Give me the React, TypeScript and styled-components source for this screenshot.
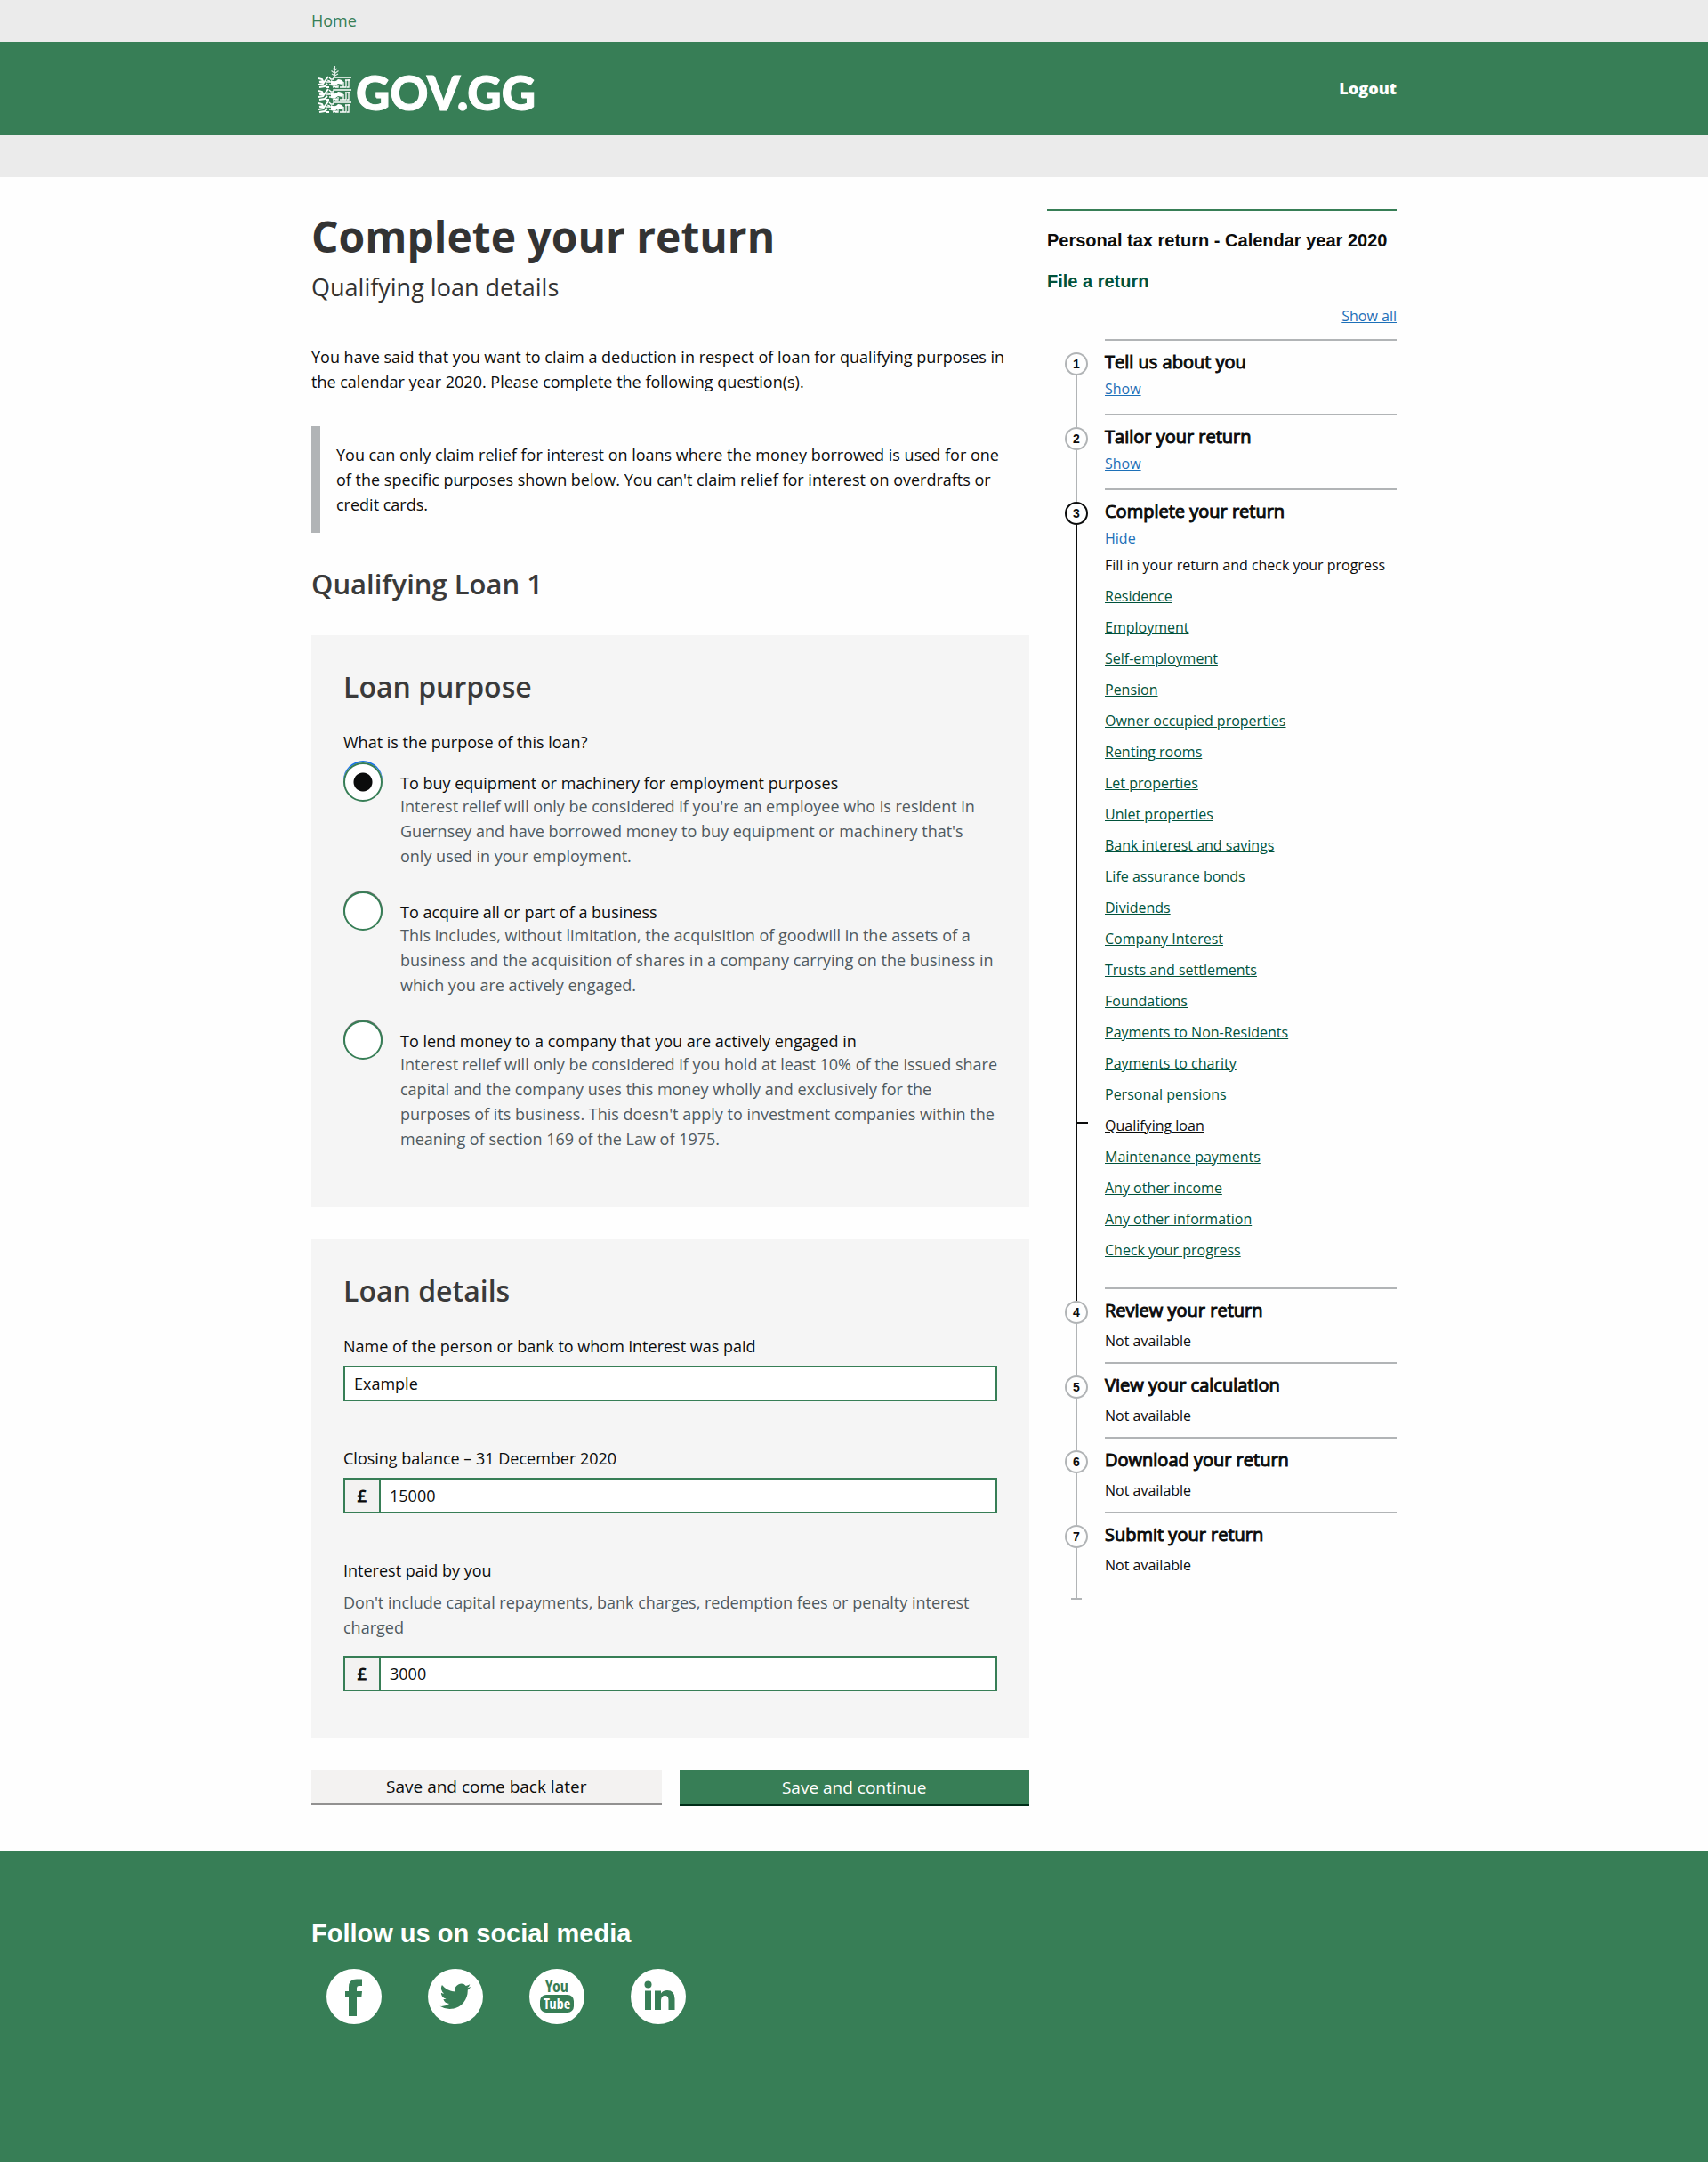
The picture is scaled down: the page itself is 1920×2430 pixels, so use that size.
import React, { useState } from "react";
import styled, { createGlobalStyle } from "styled-components";

const green = "#377e56";
const ink = "#0b0c0c";
const muted = "#505a5f";
const rule = "#b1b4b6";
const sans = '"Open Sans", "Noto Sans", sans-serif';
const arial = '"Liberation Sans", Arial, sans-serif';

const GlobalStyle = createGlobalStyle`
  *, *::before, *::after { box-sizing: border-box; }
  body {
    margin: 0;
    background: #fefefe;
    color: ${ink};
    font: 400 18px/28px ${sans};
  }
  h1, h2, h3, p, ol, ul, fieldset { margin: 0; padding: 0; border: 0; }
  ol, ul { list-style: none; }
  input, button { font: inherit; color: inherit; border-radius: 0; }
`;

const Page = styled.div`
  display: flex;
  flex-direction: column;
  min-height: 100vh;
`;

const Container = styled.div`
  width: 100%;
  max-width: 1260px;
  margin: 0 auto;
  padding: 0 20px;
`;

const GreyBar = styled.nav`
  min-height: 47px;
  padding: 9px 0 10px;
  background: #ebebeb;
`;

const HomeLink = styled.a`
  color: ${green};
  text-decoration: none;
`;

const Header = styled.header`
  background: ${green};
  color: #fff;
`;

const HeaderRow = styled(Container)`
  display: flex;
  align-items: center;
  justify-content: space-between;
  height: 105px;
`;

const LogoLink = styled.a`
  display: flex;
  align-items: center;
  gap: 4px;
  padding: 2px 0 0 8px;
  color: #fff;
  text-decoration: none;
`;

const LogoText = styled.span`
  padding-top: 6px;
  font: 900 53px/60px Lato, sans-serif;
  -webkit-text-stroke: 1px #fff;
`;

const LogoutLink = styled.a`
  padding-bottom: 2px;
  color: #fff;
  font-weight: 800;
  text-decoration: none;
`;

const Columns = styled(Container)`
  display: grid;
  grid-template-columns: minmax(0, 1fr) 393px;
  gap: 20px;
  align-items: start;
  padding-bottom: 51px;
`;

const Main = styled.main`
  padding-top: 36px;
`;

const Title = styled.h1`
  color: #333;
  font-size: 48px;
  line-height: 62px;
`;

const Subtitle = styled.p`
  margin-bottom: 38px;
  color: #333;
  font-size: 27px;
  line-height: 52px;
`;

const Inset = styled.div`
  margin: 36px 0;
  padding: 18px;
  border-left: 10px solid ${rule};
`;

const SectionTitle = styled.h2`
  margin-bottom: 36px;
  color: #3a3a3a;
  font-size: 31px;
  font-weight: 600;
  line-height: 43px;
`;

const Card = styled.section`
  margin-bottom: 36px;
  padding: 36px 36px 52px;
  background: #f5f5f5;
`;

const CardTitle = styled.h3`
  margin-bottom: 27px;
  color: #3a3a3a;
  font-size: 32px;
  font-weight: 600;
  line-height: 43px;
`;

const Legend = styled.legend`
  padding: 0;
`;

const Options = styled.div`
  display: grid;
  gap: 26px;
  padding: 9px 0 11px;
`;

const Option = styled.div`
  display: grid;
  grid-template-columns: 44px minmax(0, 1fr);
  column-gap: 20px;
  align-items: start;
`;

const Radio = styled.input`
  appearance: none;
  width: 44px;
  height: 44px;
  margin: 0;
  border: 2px solid ${green};
  border-radius: 50%;
  background: #fff;
  box-shadow: 0 -1px 0 #767676;

  &:checked {
    background: radial-gradient(circle, ${ink} 10px, #fff 11px);
    box-shadow: 0 -2px 0 #1a73e8;
  }
`;

const OptionLabel = styled.label`
  display: block;
  padding-top: 11px;
  line-height: 24px;
`;

const Hint = styled.p`
  margin-right: -2px;
  color: ${muted};
`;

const Fields = styled.div`
  display: grid;
  gap: 50px;
`;

const Field = styled.div`
  display: flex;
  flex-direction: column;
  gap: 8px;

  ${Hint} {
    margin-bottom: 10px;
  }
`;

const InputFrame = styled.div`
  display: flex;
  height: 40px;
  border: 2px solid ${green};
  background: #fff;
`;

const Prefix = styled.span`
  flex: none;
  width: 40px;
  border-right: 2px solid ${green};
  background: #f3f2f1;
  -webkit-text-stroke: 1px ${ink};
  line-height: 36px;
  text-align: center;
`;

const TextInput = styled.input`
  flex: 1;
  min-width: 0;
  padding: 0 10px;
  border: 0;
  background: transparent;
`;

const Actions = styled.div`
  display: grid;
  grid-template-columns: 1fr 1fr;
  gap: 20px;
  align-items: start;
`;

const Button = styled.button<{ $primary?: boolean }>`
  height: ${(p) => (p.$primary ? 41 : 40)}px;
  border: 0;
  border-bottom: 2px solid ${(p) => (p.$primary ? "#002d18" : "#929191")};
  background: ${(p) => (p.$primary ? green : "#f3f2f1")};
  color: ${(p) => (p.$primary ? "#fff" : ink)};
  font-size: 19px;
`;

const Aside = styled.aside`
  margin-top: 36px;
  padding-top: 19px;
  border-top: 2px solid ${green};
  font-size: 16px;
  line-height: 28px;
`;

const AsideTitle = styled.h2<{ $color: string }>`
  margin-bottom: 18px;
  color: ${(p) => p.$color};
  font: 700 20px/28px ${arial};
`;

const TextButton = styled.button`
  padding: 0;
  border: 0;
  background: none;
  color: #1d70b8;
  line-height: 28px;
  text-decoration: underline;
`;

const ShowAll = styled.div`
  display: flex;
  justify-content: flex-end;
  margin: -7px 0 12px;
`;

const Step = styled.li`
  display: grid;
  grid-template-columns: 26px minmax(0, 1fr);
  column-gap: 19px;
  padding-left: 20px;
`;

const Track = styled.div`
  display: flex;
  flex-direction: column;
  align-items: center;
  padding-top: 15px;
  margin-bottom: -15px;
`;

const Circle = styled.span<{ $active?: boolean }>`
  flex: none;
  width: 26px;
  height: 26px;
  border: 2px solid ${(p) => (p.$active ? ink : rule)};
  border-radius: 50%;
  background: #fefefe;
  font: 700 14px/22px ${arial};
  text-align: center;
`;

const Line = styled.span<{ $active?: boolean }>`
  flex: 1;
  width: 2px;
  background: ${(p) => (p.$active ? ink : rule)};
`;

const LineEnd = styled.span`
  width: 12px;
  height: 2px;
  background: ${rule};
`;

const StepBody = styled.div`
  display: flex;
  flex-direction: column;
  align-items: flex-start;
  min-height: 84px;
  border-top: 2px solid ${rule};
  padding: 10px 0;
`;

const StepTitle = styled.h3`
  margin-bottom: 2px;
  font-size: 20px;
  font-weight: 400;
  line-height: 28px;
  -webkit-text-stroke: 1px ${ink};
`;

const StepNote = styled.p<{ $gap?: boolean }>`
  padding-top: ${(p) => (p.$gap ? "4px" : "2px")};
`;

const TaskList = styled.ul`
  display: grid;
  gap: 7px;
  padding: 7px 0 18px;
`;

const Task = styled.li`
  position: relative;
`;

const TaskLink = styled.a<{ $current?: boolean }>`
  color: ${(p) => (p.$current ? ink : "#00523b")};

  &::before {
    content: ${(p) => (p.$current ? '""' : "none")};
    position: absolute;
    left: -32px;
    top: 10px;
    width: 13px;
    height: 2px;
    background: ${ink};
  }
`;

const Footer = styled.footer`
  flex: 1;
  min-height: 349px;
  padding-top: 73px;
  background: ${green};
  color: #fff;
`;

const FooterTitle = styled.h2`
  margin-bottom: 20px;
  font: 700 29px/38px ${arial};
`;

const SocialList = styled.ul`
  display: flex;
  gap: 50px;
  padding-left: 16px;
`;

const SocialLink = styled.a`
  display: block;
  height: 64px;
`;

const taskNames = [
  "Residence", "Employment", "Self-employment", "Pension", "Owner occupied properties",
  "Renting rooms", "Let properties", "Unlet properties", "Bank interest and savings",
  "Life assurance bonds", "Dividends", "Company Interest", "Trusts and settlements",
  "Foundations", "Payments to Non-Residents", "Payments to charity", "Personal pensions",
  "Qualifying loan", "Maintenance payments", "Any other income", "Any other information",
  "Check your progress",
];

const steps = [
  { title: "Tell us about you", toggle: "Show" },
  { title: "Tailor your return", toggle: "Show" },
  { title: "Complete your return", toggle: "Hide", tasks: taskNames },
  { title: "Review your return" },
  { title: "View your calculation" },
  { title: "Download your return" },
  { title: "Submit your return" },
];

const purposes = [
  {
    id: "equipment",
    label: "To buy equipment or machinery for employment purposes",
    hint: "Interest relief will only be considered if you're an employee who is resident in Guernsey and have borrowed money to buy equipment or machinery that's only\u00a0used in your employment.",
  },
  {
    id: "business",
    label: "To acquire all or part of a business",
    hint: "This includes, without limitation, the acquisition of goodwill in the assets of a business and the acquisition of shares in a company carrying on the business in which you are actively engaged.",
  },
  {
    id: "company",
    label: "To lend money to a company that you are actively engaged in",
    hint: "Interest relief will only be considered if you hold at least 10% of the issued share capital and the company uses this money wholly and exclusively for the purposes of its business. This doesn't apply to investment companies within the meaning of section 169 of the Law of 1975.",
  },
];

function Crest() {
  return (
    <svg width="38" height="54" viewBox="0 0 38 54" fill="none" stroke="#fff" aria-hidden="true">
      <path d="M18.500 0v12M16 3l2.500 2L21 3M14.500 5.500l4 3 4-3M15 9l3.500 2L22 9" strokeWidth="1.100" opacity=".85" />
      {[12, 26, 40].map((y) => (
        <g key={y} transform={`translate(0 ${y})`}>
          <path d="M0 2l4 1 1 2-4 1M11 0L8 4 5 8l-5 1M1 12l6-1 3-3M9 12h3" strokeWidth="2" />
          <path d="M12 1l2 2h3M9 6h5l3 2M12 9h4M10 4l3 1" strokeWidth="1.300" />
          <path d="M14 4q5 3 8-1 4 0 6 3l-1 3-5-1-4 3-4-1z" fill="#fff" stroke="none" />
          <path d="M16 12l5-1M22 9v3h-3M28 6v6h-4M31 4v8h-3M34 3v9h-2" strokeWidth="1.300" />
          <path d="M17 3V1h20M30 4h5" strokeWidth="1.400" />
        </g>
      ))}
    </svg>
  );
}

const socials = [
  {
    name: "Facebook",
    art: <path fill={green} d="M41 12.500V20h-4q-2 0-2 2.500V26h6l-.700 7H35v21h-9V33h-4v-7h4v-4.500q0-9 9-9z" />,
  },
  {
    name: "Twitter",
    art: (
      <path
        fill={green}
        transform="translate(14.500 14.500) scale(1.450)"
        d="M24 4.557a9.830 9.830 0 0 1-2.828.775 4.932 4.932 0 0 0 2.165-2.724 9.864 9.864 0 0 1-3.127 1.195 4.916 4.916 0 0 0-8.384 4.482A13.944 13.944 0 0 1 1.671 3.149a4.930 4.930 0 0 0 1.523 6.574 4.903 4.903 0 0 1-2.229-.616c-.054 2.281 1.581 4.415 3.949 4.890a4.935 4.935 0 0 1-2.224.084 4.928 4.928 0 0 0 4.600 3.419A9.900 9.900 0 0 1 0 19.540a13.940 13.940 0 0 0 7.548 2.212c9.142 0 14.307-7.721 13.995-14.646A10.025 10.025 0 0 0 24 4.557z"
      />
    ),
  },
  {
    name: "YouTube",
    art: (
      <g fontFamily='"Open Sans Condensed", "Roboto Condensed", Roboto, sans-serif' fontWeight="700" textAnchor="middle">
        <text x="32" y="27" fontSize="18" fill={green}>You</text>
        <rect x="13" y="30" width="38" height="20" rx="7" fill={green} />
        <text x="32" y="46" fontSize="16" fill="#fff">Tube</text>
      </g>
    ),
  },
  {
    name: "LinkedIn",
    art: (
      <g fill={green}>
        <circle cx="20.500" cy="18.500" r="4" />
        <path d="M17 25.500h7V47h-7zM28 25.500h7v3q2-3.500 7-3.500 8.500 0 8.500 9.500V47h-7V36q0-5-4-5t-4.500 5v11h-7z" />
      </g>
    ),
  },
];

export default function App() {
  const [purpose, setPurpose] = useState("equipment");
  return (
    <Page>
      <GlobalStyle />
      <GreyBar aria-label="Breadcrumb">
        <Container><HomeLink href="#home">Home</HomeLink></Container>
      </GreyBar>
      <Header>
        <HeaderRow>
          <LogoLink href="#home">
            <Crest />
            <LogoText>GOV.GG</LogoText>
          </LogoLink>
          <LogoutLink href="#logout">Logout</LogoutLink>
        </HeaderRow>
      </Header>
      <GreyBar as="div" />
      <Columns>
        <Main>
          <Title>Complete your return</Title>
          <Subtitle>Qualifying loan details</Subtitle>
          <p>
            You have said that you want to claim a deduction in respect of loan for qualifying
            purposes in the calendar year 2020. Please complete the following question(s).
          </p>
          <Inset>
            You can only claim relief for interest on loans where the money borrowed is used for one
            of the specific purposes shown below. You can't claim relief for interest on overdrafts
            or credit cards.
          </Inset>
          <SectionTitle>Qualifying Loan 1</SectionTitle>
          <Card>
            <CardTitle>Loan purpose</CardTitle>
            <fieldset>
              <Legend>What is the purpose of this loan?</Legend>
              <Options>
                {purposes.map((p) => (
                  <Option key={p.id}>
                    <Radio
                      type="radio"
                      name="purpose"
                      id={p.id}
                      checked={purpose === p.id}
                      onChange={() => setPurpose(p.id)}
                      aria-describedby={`${p.id}-hint`}
                    />
                    <div>
                      <OptionLabel htmlFor={p.id}>{p.label}</OptionLabel>
                      <Hint id={`${p.id}-hint`}>{p.hint}</Hint>
                    </div>
                  </Option>
                ))}
              </Options>
            </fieldset>
          </Card>
          <Card>
            <CardTitle>Loan details</CardTitle>
            <Fields>
              <Field>
                <label htmlFor="lender">Name of the person or bank to whom interest was paid</label>
                <InputFrame><TextInput id="lender" defaultValue="Example" /></InputFrame>
              </Field>
              <Field>
                <label htmlFor="balance">Closing balance – 31 December 2020</label>
                <InputFrame>
                  <Prefix aria-hidden="true">£</Prefix>
                  <TextInput id="balance" inputMode="decimal" defaultValue="15000" />
                </InputFrame>
              </Field>
              <Field>
                <label htmlFor="interest">Interest paid by you</label>
                <Hint id="interest-hint">
                  Don't include capital repayments, bank charges, redemption fees or penalty interest
                  charged
                </Hint>
                <InputFrame>
                  <Prefix aria-hidden="true">£</Prefix>
                  <TextInput id="interest" inputMode="decimal" defaultValue="3000" aria-describedby="interest-hint" />
                </InputFrame>
              </Field>
            </Fields>
          </Card>
          <Actions>
            <Button type="button">Save and come back later</Button>
            <Button type="button" $primary>Save and continue</Button>
          </Actions>
        </Main>
        <Aside>
          <AsideTitle $color={ink}>Personal tax return - Calendar year 2020</AsideTitle>
          <AsideTitle $color="#00523b">File a return</AsideTitle>
          <ShowAll><TextButton type="button">Show all</TextButton></ShowAll>
          <ol>
            {steps.map((step, i) => (
              <Step key={step.title}>
                <Track>
                  <Circle $active={!!step.tasks}>{i + 1}</Circle>
                  <Line $active={!!step.tasks} />
                  {i === steps.length - 1 && <LineEnd />}
                </Track>
                <StepBody>
                  <StepTitle>{step.title}</StepTitle>
                  {step.toggle ? <TextButton type="button">{step.toggle}</TextButton> : <StepNote $gap>Not available</StepNote>}
                  {step.tasks && (
                    <>
                      <StepNote>Fill in your return and check your progress</StepNote>
                      <TaskList>
                        {step.tasks.map((t) => (
                          <Task key={t}>
                            <TaskLink href="#task" $current={t === "Qualifying loan"}>{t}</TaskLink>
                          </Task>
                        ))}
                      </TaskList>
                    </>
                  )}
                </StepBody>
              </Step>
            ))}
          </ol>
        </Aside>
      </Columns>
      <Footer>
        <Container>
          <FooterTitle>Follow us on social media</FooterTitle>
          <SocialList>
            {socials.map((s) => (
              <li key={s.name}>
                <SocialLink href="#social" aria-label={s.name}>
                  <svg width="64" height="64" viewBox="0 0 64 64" aria-hidden="true">
                    <circle cx="32" cy="32" r="31" fill="#fff" />
                    {s.art}
                  </svg>
                </SocialLink>
              </li>
            ))}
          </SocialList>
        </Container>
      </Footer>
    </Page>
  );
}
